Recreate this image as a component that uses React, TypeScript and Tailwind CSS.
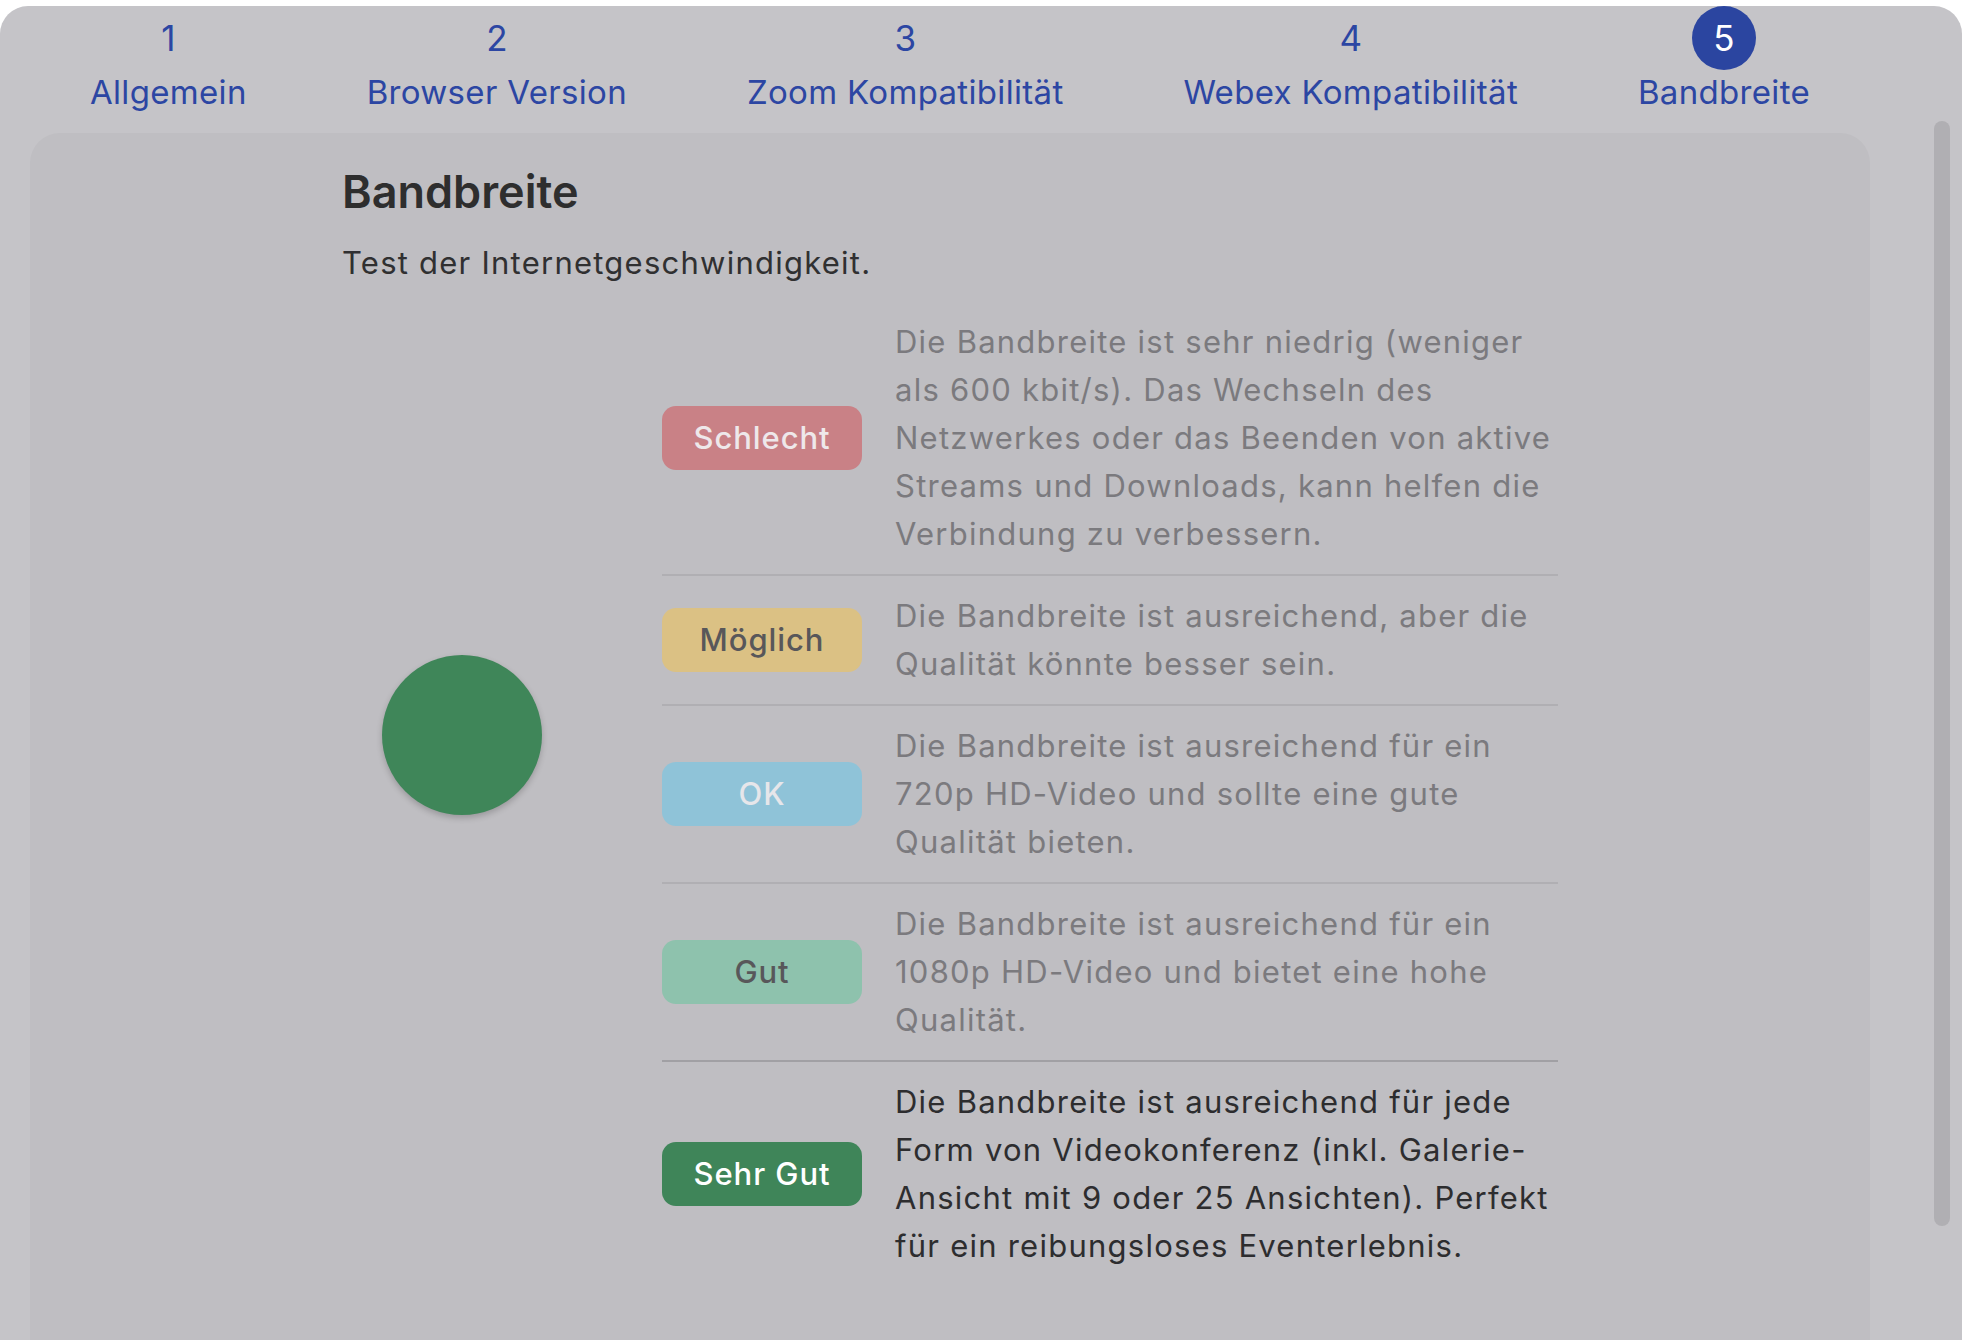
import React from "react";

type Step = { num: number; label: string; active?: boolean };

const steps: Step[] = [
  { num: 1, label: "Allgemein" },
  { num: 2, label: "Browser Version" },
  { num: 3, label: "Zoom Kompatibilität" },
  { num: 4, label: "Webex Kompatibilität" },
  { num: 5, label: "Bandbreite", active: true },
];

type Level = {
  label: string;
  badge: string;
  lines: string[];
  textColor: string;
  border: string;
};

const levels: Level[] = [
  {
    label: "Schlecht",
    badge: "bg-[#c98186] text-[#eee8ea]",
    lines: [
      "Die Bandbreite ist sehr niedrig (weniger",
      "als 600 kbit/s). Das Wechseln des",
      "Netzwerkes oder das Beenden von aktive",
      "Streams und Downloads, kann helfen die",
      "Verbindung zu verbessern.",
    ],
    textColor: "text-[#7b7a7e]",
    border: "border-b-2 border-[#b0afb3]",
  },
  {
    label: "Möglich",
    badge: "bg-[#dbc184] text-[#58575a]",
    lines: ["Die Bandbreite ist ausreichend, aber die", "Qualität könnte besser sein."],
    textColor: "text-[#7b7a7e]",
    border: "border-b-2 border-[#b0afb3]",
  },
  {
    label: "OK",
    badge: "bg-[#8fc3d8] text-[#e6e6ea]",
    lines: [
      "Die Bandbreite ist ausreichend für ein",
      "720p HD-Video und sollte eine gute",
      "Qualität bieten.",
    ],
    textColor: "text-[#7b7a7e]",
    border: "border-b-2 border-[#b0afb3]",
  },
  {
    label: "Gut",
    badge: "bg-[#8ec2ad] text-[#58575a]",
    lines: [
      "Die Bandbreite ist ausreichend für ein",
      "1080p HD-Video und bietet eine hohe",
      "Qualität.",
    ],
    textColor: "text-[#7b7a7e]",
    border: "border-b-2 border-[#a1a0a4]",
  },
  {
    label: "Sehr Gut",
    badge: "bg-[#3f8559] text-white",
    lines: [
      "Die Bandbreite ist ausreichend für jede",
      "Form von Videokonferenz (inkl. Galerie-",
      "Ansicht mit 9 oder 25 Ansichten). Perfekt",
      "für ein reibungsloses Eventerlebnis.",
    ],
    textColor: "text-[#2d2d2f]",
    border: "",
  },
];

const StepItem = ({ step }: { step: Step }) => (
  <div className="flex flex-col items-center text-[#2c46a3]">
    <div
      className={
        step.active
          ? "flex h-16 w-16 items-center justify-center rounded-full bg-[#2b45a0] text-[35px] text-white"
          : "flex h-16 w-16 items-center justify-center text-[35px]"
      }
    >
      {step.num}
    </div>
    <div className="text-[33px] leading-[44px] tracking-[0.01em]">{step.label}</div>
  </div>
);

const App = () => {
  return (
    <div className="h-[1340px] w-full overflow-hidden bg-white pt-[6px] font-['Inter',sans-serif]">
      <div className="flex h-full rounded-t-[28px] bg-[#c5c4c8]">
        <div className="ml-[30px] flex w-[1840px] shrink-0 flex-col">
          <nav className="flex justify-around">
            {steps.map((s) => (
              <StepItem key={s.num} step={s} />
            ))}
          </nav>

          <main className="mt-[19px] flex-1 rounded-t-[30px] bg-[#bfbec2]">
            <div className="mx-auto w-[1216px] pt-[32px]">
              <h1 className="text-[45px] font-semibold leading-[54px] text-[#2e2e2e]">
                Bandbreite
              </h1>
              <p className="mt-[20px] text-[31px] leading-[48px] tracking-[0.04em] text-[#303031]">
                Test der Internetgeschwindigkeit.
              </p>

              <div className="mt-[15px] flex">
                <div className="flex w-[240px] shrink-0 justify-center pt-[353px]">
                  <div className="h-40 w-40 rounded-full bg-[#3f8659] shadow-[0_3px_6px_rgba(0,0,0,0.2)]" />
                </div>

                <div className="ml-[80px] min-w-0 flex-1">
                  {levels.map((l) => (
                    <div key={l.label} className={`flex items-center gap-[33px] py-4 ${l.border}`}>
                      <div
                        className={`flex h-16 w-[200px] shrink-0 items-center justify-center rounded-[14px] text-[31px] font-medium tracking-[0.03em] ${l.badge}`}
                      >
                        {l.label}
                      </div>
                      <p
                        className={`whitespace-nowrap text-[31px] leading-[48px] tracking-[0.04em] ${l.textColor}`}
                      >
                        {l.lines.map((line, i) => (
                          <React.Fragment key={i}>
                            {i > 0 && <br />}
                            {line}
                          </React.Fragment>
                        ))}
                      </p>
                    </div>
                  ))}
                </div>
              </div>
            </div>
          </main>
        </div>

        <div className="ml-[64px] mt-[115px] h-[1105px] w-4 rounded-full bg-[#b0afb3]" />
      </div>
    </div>
  );
};

export default App;
